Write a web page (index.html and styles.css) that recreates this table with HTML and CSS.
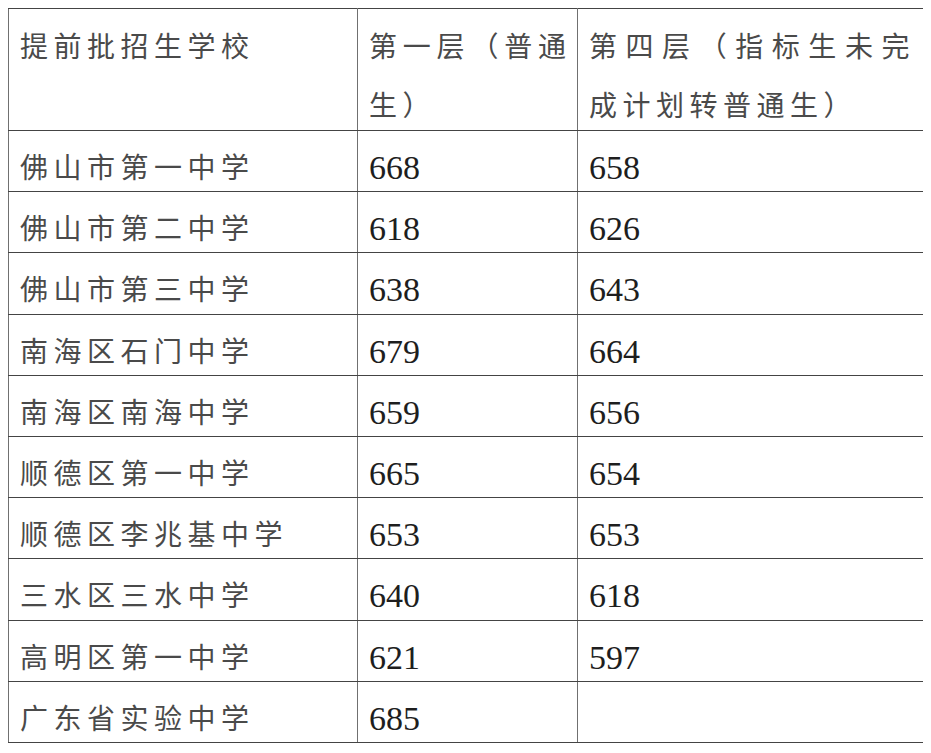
FILE: index.html
```html
<!DOCTYPE html>
<html lang="zh-CN">
<head>
<meta charset="utf-8">
<title>提前批招生学校分数线</title>
<link rel="stylesheet" href="styles.css">
</head>
<body>
<table class="scores">
  <colgroup>
    <col class="c-school">
    <col class="c-first">
    <col class="c-fourth">
  </colgroup>
  <thead>
    <tr class="head">
      <th class="cn"><span class="ln">提前批招生学校</span></th>
      <th class="cn"><span class="ln just tight">第一层（普通</span><span class="ln last">生）</span></th>
      <th class="cn"><span class="ln just">第四层（指标生未完</span><span class="ln last">成计划转普通生）</span></th>
    </tr>
  </thead>
  <tbody>
    <tr><td class="cn">佛山市第一中学</td><td class="num">668</td><td class="num">658</td></tr>
    <tr><td class="cn">佛山市第二中学</td><td class="num">618</td><td class="num">626</td></tr>
    <tr><td class="cn">佛山市第三中学</td><td class="num">638</td><td class="num">643</td></tr>
    <tr><td class="cn">南海区石门中学</td><td class="num">679</td><td class="num">664</td></tr>
    <tr><td class="cn">南海区南海中学</td><td class="num">659</td><td class="num">656</td></tr>
    <tr><td class="cn">顺德区第一中学</td><td class="num">665</td><td class="num">654</td></tr>
    <tr><td class="cn">顺德区李兆基中学</td><td class="num">653</td><td class="num">653</td></tr>
    <tr><td class="cn">三水区三水中学</td><td class="num">640</td><td class="num">618</td></tr>
    <tr><td class="cn">高明区第一中学</td><td class="num">621</td><td class="num">597</td></tr>
    <tr><td class="cn">广东省实验中学</td><td class="num">685</td><td class="num"></td></tr>
  </tbody>
</table>
</body>
</html>
```

FILE: styles.css
```css
html, body {
  background: #ffffff;
}
body {
  margin: 8px;
}
.scores {
  border-collapse: collapse;
  table-layout: fixed;
  width: 918px;
  border-top: 1px solid #8a8a8a;
  border-right: 1px solid #8a8a8a;
  border-left: 1px solid #555555;
  border-bottom: 1px solid #333333;
}
.c-school { width: 349px; }
.c-first { width: 220px; }
.c-fourth { width: 349px; }

.scores th,
.scores td {
  border-top: 1px solid #444444;
  border-bottom: 1px solid #444444;
  border-left: 1px solid #707070;
  border-right: 1px solid #707070;
  padding: 15px 11px 0 11px;
  vertical-align: top;
  text-align: left;
  font-weight: normal;
  white-space: nowrap;
  overflow: hidden;
}
.scores tbody tr {
  height: 61.2px;
}
.scores thead tr {
  height: 122px;
}
.cn {
  font-family: "Noto Sans CJK SC", "Noto Sans", sans-serif;
  font-size: 28px;
  font-weight: 300;
  letter-spacing: 5.5px;
  line-height: 40px;
  color: #4a4a4a;
}
.scores .num {
  font-family: "Liberation Serif", "Times New Roman", serif;
  font-size: 34px;
  line-height: 40px;
  color: #1e1e1e;
  padding-top: 17px;
}
.scores .head th {
  padding-top: 7px;
  line-height: 59px;
}
.ln {
  display: block;
}
.last {
  margin-bottom: -4px;
}
.just {
  text-align: justify;
  text-align-last: justify;
}
.tight {
  letter-spacing: 0;
}
```
